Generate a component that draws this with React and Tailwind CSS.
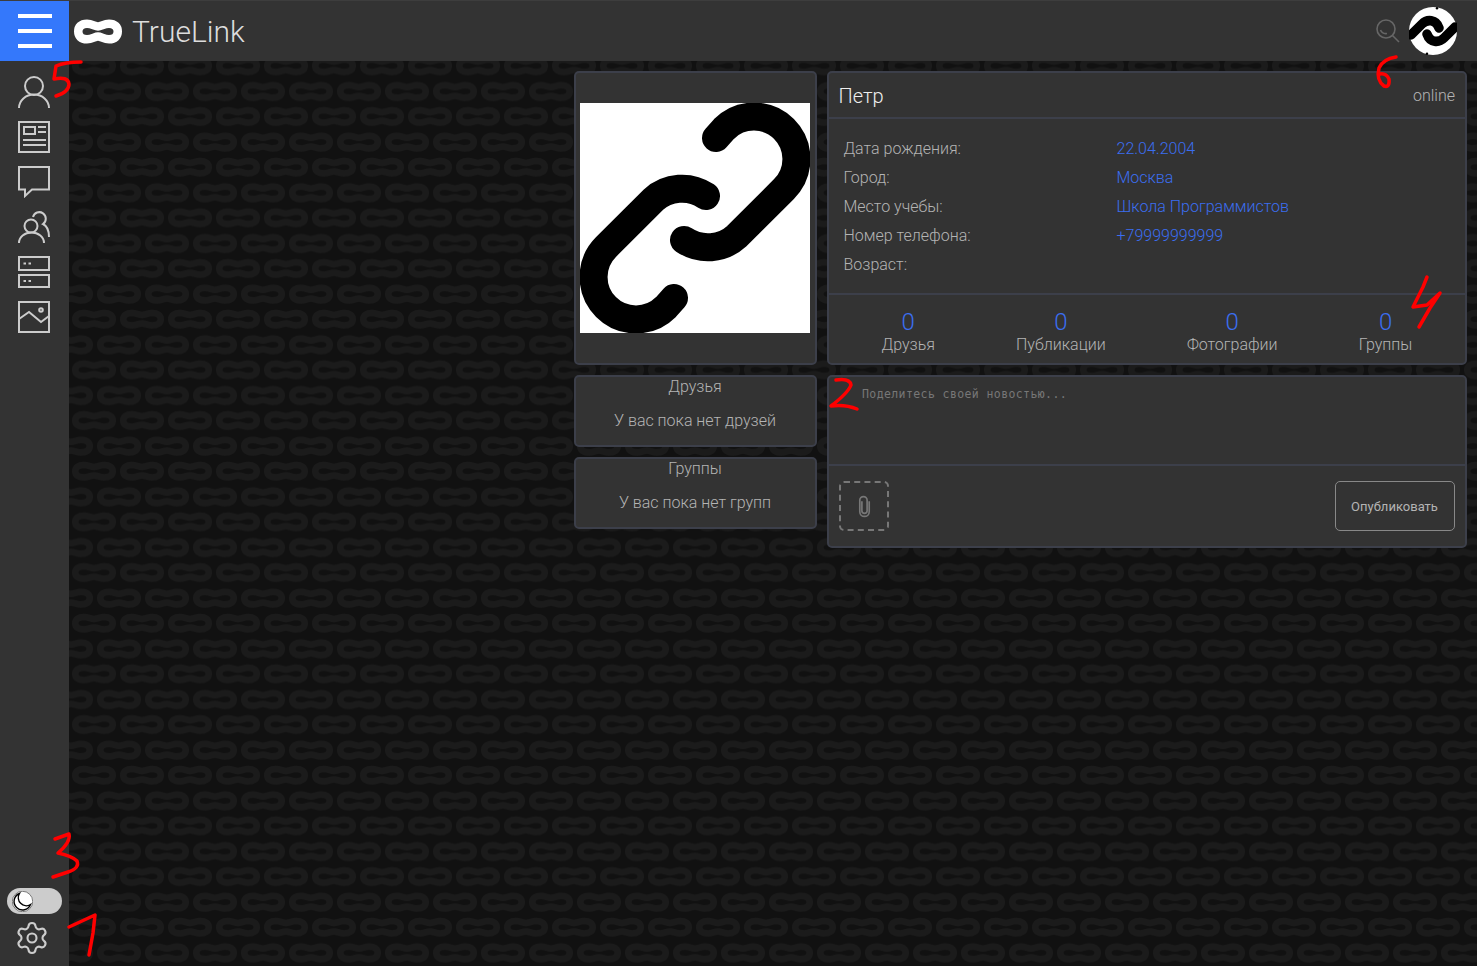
import React from "react";
import { Settings } from "lucide-react";

const linkLoop =
  "M12 3.25 C16 3.25 19 5.2 22 5.2 C25 5.2 28 3.25 32 3.25 C37.5 3.25 40.75 5.5 40.75 9.5 C40.75 13.5 37.5 15.75 32 15.75 C28 15.75 25 13.8 22 13.8 C19 13.8 16 15.75 12 15.75 C6.5 15.75 3.25 13.5 3.25 9.5 C3.25 5.5 6.5 3.25 12 3.25 Z";

const BackgroundPattern = () => (
  <svg className="absolute inset-0 w-full h-full" aria-hidden="true">
    <defs>
      <pattern id="links" width="48" height="50.67" patternUnits="userSpaceOnUse">
        <g fill="none" stroke="#1b1b1b" strokeWidth="6.5">
          <path d={linkLoop} transform="translate(24 5.67)" />
          <path d={linkLoop} transform="translate(-24 5.67)" />
          <path d={linkLoop} transform="translate(1 31.33)" />
        </g>
      </pattern>
    </defs>
    <rect width="100%" height="100%" fill="url(#links)" />
  </svg>
);

const Logo = () => (
  <svg width="48" height="27" viewBox="0 0 48 27" fill="none" stroke="#fff" strokeWidth="8.5">
    <path d="M13 5.75 C18 5.75 21 8.5 24 8.5 C27 8.5 30 5.75 35 5.75 C41 5.75 43.75 9 43.75 13.5 C43.75 18 41 21.25 35 21.25 C30 21.25 27 18.5 24 18.5 C21 18.5 18 21.25 13 21.25 C7 21.25 4.25 18 4.25 13.5 C4.25 9 7 5.75 13 5.75 Z" />
  </svg>
);

const SearchIcon = () => (
  <svg width="24" height="24" viewBox="0 0 24 24" fill="none" stroke="#666" strokeWidth="1.6">
    <circle cx="10" cy="10" r="9" />
    <path d="M16.5 16.5 L23 23" />
    <path d="M4.5 11 C5.5 13.5 8 15 11 14.5" />
  </svg>
);

const Avatar = () => (
  <svg width="48" height="48" viewBox="0 0 48 48">
    <circle cx="24" cy="24" r="24" fill="#fff" />
    <g fill="none" stroke="#000" strokeWidth="9.5" strokeLinecap="round">
      <path d="M2 28 L13 17 C18 12 27 12 30 21" />
      <path d="M46 20 L35 31 C30 36 21 36 18 27" />
    </g>
    <circle cx="28" cy="1.2" r="1.2" fill="#000" />
    <circle cx="18" cy="46.8" r="1.2" fill="#000" />
  </svg>
);

const NavIcon = ({ children }) => (
  <svg width="32" height="32" viewBox="0 0 32 32" fill="none" stroke="#ccc" strokeWidth="2">
    {children}
  </svg>
);

const navIcons = [
  <>
    <circle cx="16" cy="10" r="9" />
    <path d="M1 32 A15 13.5 0 0 1 31 32" />
  </>,
  <>
    <rect x="1" y="1" width="30" height="30" />
    <rect x="6" y="6" width="11" height="7" />
    <path d="M20 6 H28 M20 11 H28 M5 19 H28 M5 24 H28" />
  </>,
  <path d="M1 1 H31 V23.5 H14 L7 30 V23.5 H1 Z" />,
  <>
    <circle cx="13" cy="15" r="6.5" />
    <path d="M1 32 A12.5 10.5 0 0 1 26 32" />
    <path d="M15 6 A6.5 6.5 0 1 1 25 13 C29 15 31 20 31 26" />
  </>,
  <>
    <rect x="1" y="1" width="30" height="13" />
    <rect x="1" y="19" width="30" height="12" />
    <path d="M5.5 7.5 H8 M10.5 7.5 H13 M5.5 25 H8 M10.5 25 H13" />
  </>,
  <>
    <rect x="1" y="1" width="30" height="30" />
    <path d="M1 18 L11 11 L23 21 L31 15" />
    <circle cx="23" cy="9" r="1.8" />
  </>,
];

const BigLink = () => (
  <svg width="230" height="230" viewBox="0 0 230 230" className="bg-white" fill="none" stroke="#000" strokeWidth="28" strokeLinecap="round">
    <path d="M136 35 L144 26 A42 42 0 0 1 204 86 L157 133 A43 43 0 0 1 104 137" />
    <path d="M94 195 L86 204 A42 42 0 0 1 26 144 L73 97 A43 43 0 0 1 126 93" />
  </svg>
);

const PaperclipIcon = () => (
  <svg width="13" height="23" viewBox="0 0 12 22" fill="none" stroke="#777" strokeWidth="1.6">
    <path d="M10.5 6 V16 A4.5 4.5 0 0 1 1.5 16 V5 A3.5 3.5 0 0 1 8.5 5 V15 A2.5 2.5 0 0 1 3.5 15 V6" />
  </svg>
);

const MoonKnob = () => (
  <svg width="21" height="21" viewBox="0 0 21 21" fill="none">
    <circle cx="10.5" cy="10.5" r="10.2" fill="#fff" stroke="#333" strokeWidth="0.6" />
    <path d="M7.5 2.5 A8.5 8.5 0 1 0 18.5 13.5 A8 8 0 0 1 7.5 2.5 Z" stroke="#000" strokeWidth="1.4" />
  </svg>
);

// hand drawn red numbers on top of the screenshot
const scribbles = [
  "M81 62 Q65 62 56 66 L54 79 Q68 76 69 84 Q69 92 56 96",
  "M1396 57 Q1383 59 1379 68 Q1376 80 1384 86 Q1390 88 1389 79 Q1386 73 1380 74",
  "M1427 277 L1423 287 L1413 307 L1427 305 L1440 293 L1430 308 L1419 327",
  "M836 380 Q850 378 851 385 Q848 393 831 406 Q845 404 857 409",
  "M55 839 L69 834 Q71 842 58 853 Q72 856 77 861 Q80 868 68 872 L53 877",
  "M69 927 L95 915 L93 933 L89 955",
];

const Scribbles = () => (
  <svg className="absolute inset-0 w-full h-full pointer-events-none z-10" aria-hidden="true" fill="none" stroke="#f00" strokeWidth="3.5" strokeLinecap="round" strokeLinejoin="round">
    {scribbles.map((d, index) => (
      <path key={index} d={d} />
    ))}
  </svg>
);

const info = [
  ["Дата рождения:", "22.04.2004"],
  ["Город:", "Москва"],
  ["Место учебы:", "Школа Программистов"],
  ["Номер телефона:", "+79999999999"],
  ["Возраст:", ""],
];

const stats = ["Друзья", "Публикации", "Фотографии", "Группы"];

const cardClass = "bg-[#333] border-2 border-[#3c3f4a] rounded-[5px]";

const SideCard = ({ title, text }) => (
  <div className={`${cardClass} h-[72px] flex flex-col items-center pr-[1px] leading-[19px] text-[16px]`}>
    <div>{title}</div>
    <div className="mt-[15px]">{text}</div>
  </div>
);

const App = () => {
  return (
    <div className="relative h-screen overflow-hidden flex flex-col bg-[#111] text-[#b4b4b4] font-light font-['Roboto',sans-serif]">
      <BackgroundPattern />

      <header className="relative h-[61px] shrink-0 flex items-center bg-[#333] border-t border-[#3d3d3d] pr-[20px]">
        <button className="w-[69px] h-[60px] bg-[#3478fb] flex flex-col items-center justify-center gap-[11px]">
          <span className="w-[34px] h-[4px] bg-white" />
          <span className="w-[34px] h-[4px] bg-white" />
          <span className="w-[34px] h-[4px] bg-white" />
        </button>
        <div className="ml-[5px]">
          <Logo />
        </div>
        <span className="ml-[10px] pt-[1px] text-[30px] leading-none text-[#ddd]">TrueLink</span>
        <div className="ml-auto flex items-center gap-[9px]">
          <SearchIcon />
          <Avatar />
        </div>
      </header>

      <div className="relative flex-1 flex min-h-0">
        <aside className="w-[69px] shrink-0 bg-[#333] flex flex-col justify-between pt-[15px] pb-[10px]">
          <nav className="flex flex-col items-center gap-[13px] pr-[1px]">
            {navIcons.map((icon, index) => (
              <NavIcon key={index}>{icon}</NavIcon>
            ))}
          </nav>
          <div className="flex flex-col items-start pl-[7px] gap-[6px]">
            <div className="w-[55px] h-[26px] rounded-full bg-[#ccc] flex items-center pl-[5px]">
              <MoonKnob />
            </div>
            <Settings size={36} strokeWidth={1.4} className="text-[#ccc] ml-[7px]" />
          </div>
        </aside>

        <main className="flex-1 flex justify-end gap-[10px] pt-[10px] pr-[10px]">
          <div className="w-[243px] flex flex-col gap-[10px] items-stretch">
            <div className={`${cardClass} h-[294px] flex items-center justify-center pr-[1px]`}>
              <BigLink />
            </div>
            <SideCard title="Друзья" text="У вас пока нет друзей" />
            <SideCard title="Группы" text="У вас пока нет групп" />
          </div>

          <div className="w-[640px] flex flex-col gap-[10px]">
            <div className={`${cardClass} h-[294px] flex flex-col`}>
              <div className="h-[46px] shrink-0 flex items-center justify-between pl-[9.5px] pr-[10px] pt-[1px] border-b-2 border-[#3c3f4a]">
                <span className="text-[20px] text-[#eee]">Петр</span>
                <span className="text-[16px]">online</span>
              </div>
              <div className="h-[176px] shrink-0 pt-[15px] pl-[14.5px] border-b-2 border-[#3c3f4a] text-[16px] leading-[29px]">
                {info.map(([label, value]) => (
                  <div key={label} className="flex">
                    <span className="w-[273px]">{label}</span>
                    <span className="text-[#3b6ef0]">{value}</span>
                  </div>
                ))}
              </div>
              <div className="flex-1 flex justify-around px-[12px] pt-[15px]">
                {stats.map((stat) => (
                  <div key={stat} className="flex flex-col items-center">
                    <span className="text-[24px] leading-[24px] text-[#3b6ef0]">0</span>
                    <span className="text-[16px] leading-[22px]">{stat}</span>
                  </div>
                ))}
              </div>
            </div>

            <div className={`${cardClass} h-[173px] flex flex-col`}>
              <textarea
                className="h-[89px] shrink-0 bg-transparent resize-none outline-none pl-[33px] pt-[10px] text-[11.5px] leading-[14px] tracking-[0.4px] font-normal font-['DejaVu_Sans_Mono',monospace] placeholder:text-[#777] border-b-2 border-[#3c3f4a]"
                placeholder="Поделитесь своей новостью..."
              />
              <div className="flex-1 flex items-center justify-between px-[10px]">
                <div className="w-[50px] h-[50px] border-2 border-dashed border-[#777] rounded-[5px] flex items-center justify-center">
                  <PaperclipIcon />
                </div>
                <button className="w-[120px] h-[50px] pt-[1px] pr-[1px] border border-[#888] rounded-[5px] text-[13px] font-normal">
                  Опубликовать
                </button>
              </div>
            </div>
          </div>
        </main>
      </div>

      <Scribbles />
    </div>
  );
};

export default App;
